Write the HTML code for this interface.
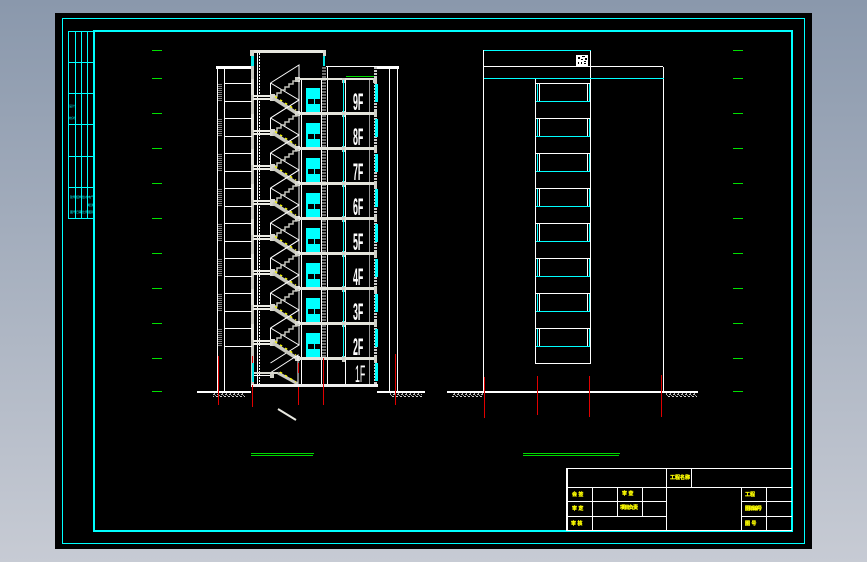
<!DOCTYPE html>
<html>
<head>
<meta charset="utf-8">
<style>
html,body{margin:0;padding:0;width:867px;height:562px;overflow:hidden;background:linear-gradient(180deg,#8a98ac 0%,#c7cbd4 100%)}
svg{position:absolute;left:0;top:0;display:block}
text{font-family:"Liberation Sans","Noto Sans CJK SC",sans-serif}
</style>
</head>
<body>
<svg width="867" height="562" viewBox="0 0 867 562" xmlns="http://www.w3.org/2000/svg" shape-rendering="crispEdges">
<defs>
<g id="tick"><rect x="0" y="0" width="10" height="1" fill="#00e000"/></g>
<g id="ticks">
<use href="#tick" y="50"/><use href="#tick" y="78"/><use href="#tick" y="113"/><use href="#tick" y="148"/><use href="#tick" y="183"/><use href="#tick" y="218"/><use href="#tick" y="253"/><use href="#tick" y="288"/><use href="#tick" y="323"/><use href="#tick" y="358"/><use href="#tick" y="391"/>
</g>
<g id="floor">
<g fill="none" stroke="#fff" stroke-width="1" shape-rendering="auto">
<path d="M270.5 83 L299 65 V100 M270.5 83 V96 M270.5 83 L299 100 L270.5 118"/>
</g>
<path d="M273 96 L277 96 L277 93 L281 93 L281 90 L285 90 L285 87 L289 87 L289 84 L293 84 L293 81 L297 81 L299 79" fill="none" stroke="#c4c4bc" stroke-width="1.500" shape-rendering="auto"/>
<rect x="253" y="95" width="20" height="2" fill="#ecece4"/>
<rect x="253" y="98" width="20" height="2" fill="#ecece4"/>
<rect x="270" y="94" width="5" height="7" fill="#d8d8d0"/>
<path d="M273 98 L298 114" stroke="#c8c8c0" stroke-width="3.500" fill="none" shape-rendering="auto"/>
<path d="M275 96.500 L296 110" stroke="#ffff00" stroke-width="1.300" stroke-dasharray="2.500 3.500" fill="none" shape-rendering="auto"/>
<rect x="306" y="88" width="14" height="25" fill="#00ffff"/>
<rect x="308" y="99" width="6" height="5" fill="#000"/>
<rect x="315" y="99" width="5" height="5" fill="#000"/>
<rect x="297" y="112" width="80" height="3" fill="#e4e4dc"/>
<rect x="295" y="111" width="5" height="5" fill="#d8d8d0"/>
<rect x="342" y="111" width="3" height="6" fill="#d0d0c8"/>
<rect x="374" y="111" width="3" height="6" fill="#d0d0c8"/>
<rect x="251" y="79" width="3" height="16" fill="#e0e0d8"/>
<rect x="251" y="100" width="3" height="13" fill="#c8c8c0"/>
<rect x="343" y="80" width="1" height="32" fill="#00ffff"/>
<rect x="375" y="84" width="3" height="18" fill="#00ffff"/>
<rect x="224" y="83" width="28" height="1" fill="#fff"/>
<rect x="224" y="101" width="28" height="1" fill="#fff"/>
<path d="M219 84 V101 M221 84 V101" stroke="#fff" stroke-width="1" stroke-dasharray="1 1" fill="none"/>
</g>
<g id="win">
<rect x="535" y="83" width="55" height="1" fill="#fff"/>
<rect x="537" y="84" width="1" height="17" fill="#00ffff"/>
<rect x="539" y="84" width="1" height="17" fill="#fff"/>
<rect x="587" y="84" width="1" height="17" fill="#fff"/>
<rect x="589" y="84" width="1" height="17" fill="#00ffff"/>
<rect x="536" y="101" width="54" height="1" fill="#00ffff"/>
</g>
<pattern id="h" width="4" height="4" patternUnits="userSpaceOnUse">
<rect x="0" y="0" width="2" height="1" fill="#ccc"/><rect x="2" y="1" width="1" height="1" fill="#aaa"/><rect x="1" y="2" width="2" height="1" fill="#bbb"/><rect x="3" y="3" width="1" height="1" fill="#999"/>
</pattern>
</defs>

<rect x="55" y="13" width="757" height="536" fill="#000"/>
<rect x="62.500" y="18.500" width="742" height="525" fill="none" stroke="#00ffff" stroke-width="1"/>
<rect x="94" y="31" width="698" height="500" fill="none" stroke="#00ffff" stroke-width="2"/>

<g fill="#00ffff">
<rect x="68" y="31" width="1" height="188"/>
<rect x="75" y="31" width="1" height="188"/>
<rect x="81" y="31" width="1" height="188"/>
<rect x="87" y="31" width="1" height="188"/>
<rect x="68" y="31" width="26" height="1"/>
<rect x="68" y="62" width="26" height="1"/>
<rect x="68" y="93" width="26" height="1"/>
<rect x="68" y="124" width="26" height="1"/>
<rect x="68" y="156" width="26" height="1"/>
<rect x="68" y="187" width="26" height="1"/>
<rect x="68" y="218" width="26" height="1"/>
</g>
<g fill="#00ffff" style="font-size:3px">
<text x="69" y="107">设计</text>
<text x="69" y="119">校对</text>
<text x="70" y="198">建筑</text>
<text x="76" y="198">结构</text>
<text x="82" y="198">给水</text>
<text x="88" y="198">电气</text>
<text x="88" y="206">暖通</text>
<text x="70" y="213">图号</text>
<text x="76" y="213">日期</text>
<text x="82" y="213">比例</text>
<text x="88" y="213">图别</text>
</g>

<use href="#ticks" x="152"/>
<use href="#ticks" x="733"/>

<rect x="216" y="66" width="36" height="3" fill="#fff"/>
<rect x="375" y="66" width="24" height="3" fill="#fff"/>
<rect x="326" y="66" width="49" height="1" fill="#fff"/>
<rect x="346" y="76" width="28" height="1" fill="#00e000"/>
<rect x="217" y="68" width="1" height="324" fill="#fff"/>
<rect x="224" y="68" width="1" height="324" fill="#fff"/>
<rect x="389" y="68" width="1" height="324" fill="#fff"/>
<rect x="397" y="68" width="1" height="324" fill="#fff"/>
<rect x="251" y="50" width="74" height="3" fill="#e8e8e0"/>
<rect x="250" y="50" width="4" height="6" fill="#d8d8d0"/>
<rect x="251" y="56" width="3" height="10" fill="#00e8e8"/>
<rect x="323" y="50" width="3" height="6" fill="#d8d8d0"/>
<rect x="323" y="56" width="2" height="10" fill="#00e8e8"/>
<rect x="251" y="66" width="3" height="320" fill="#c8c8c0"/>
<path d="M259.500 53 V385" stroke="#fff" stroke-width="1" stroke-dasharray="2 1" fill="none"/>
<path d="M257.500 53 V385" stroke="#fff" stroke-width="1" fill="none"/>
<rect x="301" y="78" width="1" height="307" fill="#fff"/>
<rect x="321" y="78" width="1" height="307" fill="#fff"/>
<rect x="327" y="67" width="1" height="318" fill="#fff"/>
<path d="M323 67 V361 M325 67 V361" stroke="#ddd" stroke-width="1" stroke-dasharray="2 1" fill="none"/>
<rect x="345" y="79" width="1" height="306" fill="#fff"/>
<rect x="369" y="79" width="1" height="306" fill="#999"/>
<path d="M375.500 67 V385" stroke="#ccc" stroke-width="3" stroke-dasharray="2 1" fill="none"/>
<rect x="297" y="78" width="80" height="2" fill="#e4e4dc"/>
<rect x="295" y="77" width="5" height="5" fill="#d0d0c8"/>
<rect x="342" y="78" width="3" height="5" fill="#d0d0c8"/>
<rect x="373" y="78" width="4" height="5" fill="#d0d0c8"/>

<use href="#floor"/>
<use href="#floor" y="35"/>
<use href="#floor" y="70"/>
<use href="#floor" y="105"/>
<use href="#floor" y="140"/>
<use href="#floor" y="175"/>
<use href="#floor" y="210"/>
<use href="#floor" y="245"/>

<g fill="none" stroke="#fff" stroke-width="1" shape-rendering="auto">
<path d="M270 373 L298 355 V384"/>
</g>
<rect x="253" y="372" width="25" height="2" fill="#d8d8d0"/>
<rect x="253" y="375" width="18" height="1" fill="#fff"/>
<rect x="270" y="374" width="4" height="4" fill="#d0d0c8"/>
<path d="M278 373 L298 384" stroke="#c8c8c0" stroke-width="3" fill="none" shape-rendering="auto"/>
<path d="M280 372 L296 382" stroke="#ffff00" stroke-width="1.300" stroke-dasharray="2.500 3.500" fill="none" shape-rendering="auto"/>
<rect x="252" y="363" width="2" height="19" fill="#00e8e8"/>
<rect x="375" y="363" width="3" height="18" fill="#00ffff"/>
<rect x="251" y="384" width="127" height="3" fill="#f0f0f0"/>

<g fill="#fff" font-weight="bold" style="font-size:24px">
<text transform="translate(353,110) scale(.37,1)">9F</text>
<text transform="translate(353,145) scale(.37,1)">8F</text>
<text transform="translate(353,180) scale(.37,1)">7F</text>
<text transform="translate(353,215) scale(.37,1)">6F</text>
<text transform="translate(353,250) scale(.37,1)">5F</text>
<text transform="translate(353,285) scale(.37,1)">4F</text>
<text transform="translate(353,320) scale(.37,1)">3F</text>
<text transform="translate(353,355) scale(.37,1)">2F</text>
<text transform="translate(355,382) scale(.37,1)" style="font-weight:normal">1F</text>
</g>

<rect x="197" y="391" width="54" height="2" fill="#fff"/>
<rect x="377" y="391" width="48" height="2" fill="#fff"/>
<rect x="213" y="393" width="32" height="4" fill="url(#h)"/>
<rect x="390" y="393" width="32" height="4" fill="url(#h)"/>
<g fill="#e00000">
<rect x="218" y="356" width="1" height="49"/>
<rect x="252" y="356" width="1" height="7"/>
<rect x="252" y="385" width="1" height="22"/>
<rect x="298" y="363" width="1" height="10"/>
<rect x="298" y="387" width="1" height="18"/>
<rect x="323" y="358" width="1" height="47"/>
<rect x="395" y="354" width="1" height="51"/>
</g>
<path d="M278 409 L296 420" stroke="#e8e8e0" stroke-width="2" fill="none" shape-rendering="auto"/>
<rect x="251" y="453" width="63" height="1" fill="#00d800"/>
<rect x="251" y="455" width="62" height="1" fill="#00d800"/>

<rect x="484" y="50" width="107" height="1" fill="#00ffff"/>
<rect x="483" y="50" width="1" height="342" fill="#fff"/>
<rect x="590" y="51" width="1" height="313" fill="#fff"/>
<rect x="484" y="66" width="179" height="1" fill="#fff"/>
<rect x="663" y="67" width="1" height="325" fill="#fff"/>
<rect x="484" y="78" width="180" height="1" fill="#00ffff"/>
<rect x="535" y="79" width="1" height="285" fill="#fff"/>
<rect x="535" y="363" width="56" height="1" fill="#fff"/>
<rect x="576" y="55" width="12" height="11" fill="#fff"/>
<g fill="#000">
<rect x="578" y="57" width="2" height="2"/><rect x="582" y="56" width="3" height="1"/><rect x="585" y="58" width="2" height="2"/><rect x="581" y="59" width="2" height="1"/><rect x="578" y="62" width="1" height="2"/><rect x="581" y="62" width="1" height="2"/><rect x="584" y="61" width="2" height="1"/><rect x="584" y="63" width="2" height="1"/>
</g>
<use href="#win"/>
<use href="#win" y="35"/>
<use href="#win" y="70"/>
<use href="#win" y="105"/>
<use href="#win" y="140"/>
<use href="#win" y="175"/>
<use href="#win" y="210"/>
<use href="#win" y="245"/>
<rect x="447" y="391" width="251" height="2" fill="#fff"/>
<rect x="452" y="393" width="31" height="4" fill="url(#h)"/>
<rect x="666" y="393" width="31" height="4" fill="url(#h)"/>
<g fill="#e00000">
<rect x="484" y="377" width="1" height="41"/>
<rect x="537" y="376" width="1" height="39"/>
<rect x="589" y="376" width="1" height="41"/>
<rect x="661" y="375" width="1" height="42"/>
</g>
<rect x="523" y="453" width="97" height="1" fill="#00d800"/>
<rect x="523" y="455" width="96" height="1" fill="#00d800"/>

<g fill="#fff">
<rect x="566" y="468" width="226" height="1"/>
<rect x="566" y="468" width="2" height="63"/>
<rect x="567" y="487" width="225" height="1"/>
<rect x="567" y="501" width="100" height="1"/>
<rect x="741" y="501" width="51" height="1"/>
<rect x="567" y="516" width="100" height="1"/>
<rect x="741" y="516" width="51" height="1"/>
<rect x="567" y="530" width="225" height="1"/>
<rect x="666" y="468" width="1" height="63"/>
<rect x="691" y="468" width="1" height="19"/>
<rect x="592" y="487" width="1" height="43"/>
<rect x="617" y="487" width="1" height="29"/>
<rect x="642" y="487" width="1" height="29"/>
<rect x="741" y="487" width="1" height="43"/>
<rect x="766" y="487" width="1" height="43"/>
</g>
<g fill="#ffff00" stroke="#ffff00" stroke-width=".3" font-weight="bold" style="font-size:5px">
<text x="670" y="479">工程名称</text>
<text x="572" y="496">会 签</text>
<text x="622" y="495">审 查</text>
<text x="572" y="510">审 定</text>
<text x="620" y="509" textLength="18">项目负责</text>
<text x="571" y="525">审 核</text>
<text x="745" y="496">工程</text>
<text x="745" y="510" textLength="17">图纸编号</text>
<text x="745" y="525">图 号</text>
</g>
</svg>
</body>
</html>
